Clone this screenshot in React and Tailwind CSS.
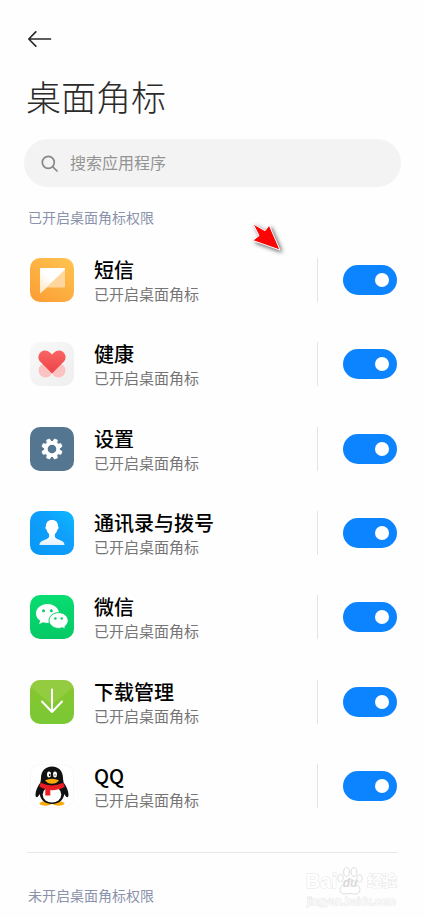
import { useId, useState } from 'react';

function MessageIcon() {
  return (
    <svg viewBox="0 0 44 44" className="size-11 shrink-0" aria-hidden="true">
      <defs>
        <linearGradient id="msgBg" x1="0.9" y1="0" x2="0.2" y2="1">
          <stop offset="0" stopColor="#ffc350" />
          <stop offset="1" stopColor="#fb9f35" />
        </linearGradient>
        <linearGradient id="msgFold" x1="0.1" y1="0.9" x2="0.9" y2="0.1">
          <stop offset="0" stopColor="#ffe9cb" />
          <stop offset="0.5" stopColor="#fff" />
        </linearGradient>
      </defs>
      <rect width="44" height="44" rx="10" fill="url(#msgBg)" />
      <path d="M11 10h23a1 1 0 0 1 1 1v17.500a1 1 0 0 1-1 1H17.500L10 35.500V11a1 1 0 0 1 1-1z" fill="#ffe6c4" opacity="0.700" />
      <path d="M11 10h23a1 1 0 0 1 1 1v.500L10 35.500V11a1 1 0 0 1 1-1z" fill="url(#msgFold)" />
    </svg>
  );
}

function HealthIcon() {
  return (
    <svg viewBox="0 0 44 44" className="size-11 shrink-0" aria-hidden="true">
      <defs>
        <linearGradient id="healthBg" x1="0" y1="0" x2="1" y2="1">
          <stop offset="0" stopColor="#f8f8f8" />
          <stop offset="1" stopColor="#efefef" />
        </linearGradient>
        <linearGradient id="heart" x1="0.5" y1="0" x2="0.5" y2="1">
          <stop offset="0" stopColor="#f96663" />
          <stop offset="1" stopColor="#ed4248" />
        </linearGradient>
      </defs>
      <rect width="44" height="44" rx="10" fill="url(#healthBg)" />
      <circle cx="15.500" cy="28.500" r="7" fill="#fac3c2" />
      <circle cx="28.500" cy="28.500" r="7" fill="#fac3c2" />
      <path d="M22 31.500 10.300 19.700C7.700 17 7.900 12.900 10.400 10.400c2.800-2.800 7-2.500 9.500 0L22 12.500l2.100-2.100c2.500-2.500 6.700-2.800 9.500 0 2.500 2.500 2.700 6.600.1 9.300z" fill="url(#heart)" />
    </svg>
  );
}

const TEETH = [0, 45, 90, 135, 180, 225, 270, 315];

function SettingsIcon() {
  return (
    <svg viewBox="0 0 44 44" className="size-11 shrink-0" aria-hidden="true">
      <rect width="44" height="44" rx="10" fill="#547690" />
      <g fill="#fff">
        <circle cx="22" cy="22" r="8" />
        {TEETH.map((angle) => (
          <path key={angle} d="M19.800 15 20.500 11.800h3l.7 3.200z" stroke="#fff" strokeWidth="0.800" strokeLinejoin="round" transform={`rotate(${angle + 22.5} 22 22)`} />
        ))}
      </g>
      <circle cx="22" cy="22" r="4.300" fill="#547690" />
    </svg>
  );
}

function ContactsIcon() {
  return (
    <svg viewBox="0 0 44 44" className="size-11 shrink-0" aria-hidden="true">
      <defs>
        <linearGradient id="contactBg" x1="0" y1="1" x2="1" y2="0">
          <stop offset="0" stopColor="#0797f5" />
          <stop offset="0.600" stopColor="#109ffb" />
          <stop offset="1" stopColor="#0bb9ff" />
        </linearGradient>
        <linearGradient id="person" x1="0" y1="0" x2="0" y2="1">
          <stop offset="0.500" stopColor="#fff" />
          <stop offset="1" stopColor="#e3f1fb" />
        </linearGradient>
      </defs>
      <rect width="44" height="44" rx="10" fill="url(#contactBg)" />
      <path d="M22 9c4 0 6.200 2.700 6.100 6.600.9.300.5 2.600-.7 3.200-.5 2-1.500 3.500-2.500 4.300v2.500c0 1.200 1 1.900 3.500 2.800 3.500 1.200 6.100 2.200 6.100 5.600H9.500c0-3.400 2.600-4.400 6.100-5.600 2.500-.9 3.500-1.600 3.500-2.800v-2.500c-1-.8-2-2.300-2.500-4.300-1.200-.6-1.600-2.900-.7-3.200C15.800 11.700 18 9 22 9z" fill="url(#person)" />
    </svg>
  );
}

function WechatIcon() {
  return (
    <svg viewBox="0 0 44 44" className="size-11 shrink-0" aria-hidden="true">
      <defs>
        <linearGradient id="wechatBg" x1="0" y1="0" x2="0" y2="1">
          <stop offset="0" stopColor="#08dd70" />
          <stop offset="1" stopColor="#05c965" />
        </linearGradient>
      </defs>
      <rect width="44" height="44" rx="10" fill="url(#wechatBg)" />
      <path d="M17.500 9C10.900 9 6 13.300 6 18.500c0 3 1.600 5.600 4.200 7.300L9 29.200l4-2c1.400.5 2.900.8 4.500.8C24 28 29 23.700 29 18.500S24 9 17.500 9z" fill="#fff" />
      <path d="M28.500 17.600c5.300 0 9.700 3.600 9.700 8 0 2.500-1.300 4.600-3.400 6l.8 2.700-3.200-1.600c-1.200.5-2.500.7-3.900.7-5.300 0-9.500-3.500-9.500-7.800s4.200-8 9.500-8z" fill="#fff" stroke="#06d06a" strokeWidth="1" />
      <g fill="#07cd69">
        <circle cx="13.500" cy="15.800" r="1.500" />
        <circle cx="21.300" cy="15.800" r="1.500" />
        <circle cx="25.400" cy="23.500" r="1.200" />
        <circle cx="31.700" cy="23.500" r="1.200" />
      </g>
    </svg>
  );
}

function DownloadIcon() {
  return (
    <svg viewBox="0 0 44 44" className="size-11 shrink-0" aria-hidden="true">
      <defs>
        <linearGradient id="dlBg" x1="0" y1="0" x2="0" y2="1">
          <stop offset="0" stopColor="#8bc52e" />
          <stop offset="1" stopColor="#79c935" />
        </linearGradient>
      </defs>
      <rect width="44" height="44" rx="10" fill="url(#dlBg)" />
      <path d="M1 7Q3 0 10 0h24q7 0 9 7L22 25z" fill="#9fd152" opacity="0.500" />
      <path d="M22 9.500v22M12 21.500l10 10.500 10-10.500" fill="none" stroke="#fff" strokeWidth="2" strokeLinecap="round" strokeLinejoin="round" />
    </svg>
  );
}

function QQIcon() {
  return (
    <svg viewBox="0 0 44 44" className="size-11 shrink-0" aria-hidden="true">
      <rect x="0.500" y="0.500" width="43" height="43" rx="10" fill="#fff" stroke="#f8f8f8" />
      <ellipse cx="15.500" cy="39.500" rx="6" ry="2.200" fill="#faab07" />
      <ellipse cx="28.500" cy="39.500" rx="6" ry="2.200" fill="#faab07" />
      <path d="M22 2.500c-7 0-11 5-11 11.500 0 1.500-.4 3-.6 4.500C7.500 22.500 5.500 27 5.500 30.500c0 1.800.5 2.700 1 2.700 1.200 0 2.300-1.700 3.200-3.200C10.600 36.500 15.500 40 22 40s11.400-3.500 12.300-10c.9 1.500 2 3.200 3.200 3.200.5 0 1-.9 1-2.700 0-3.500-2-8-4.900-12-.2-1.500-.6-3-.6-4.500 0-6.500-4-11.500-11-11.500z" fill="#111" />
      <ellipse cx="22" cy="30.500" rx="9.300" ry="8" fill="#fff" />
      <path d="M10.700 18.800Q22 24 33.300 18.800l1.500 4.200Q28 27 20.300 26v5.500h-5V25q-3-.8-6-2.400z" fill="#ea1c24" />
      <ellipse cx="19" cy="10.500" rx="2" ry="3" fill="#fff" />
      <ellipse cx="25" cy="10.500" rx="2" ry="3" fill="#fff" />
      <ellipse cx="19.700" cy="11" rx="0.800" ry="1.300" fill="#111" />
      <path d="M24.100 11.500q.8-1.800 1.700 0" fill="none" stroke="#111" strokeWidth="0.800" />
      <path d="M15 16.300q7-3.300 14 0-2.500 3.500-7 3.500t-7-3.500z" fill="#faab07" />
    </svg>
  );
}

const APPS = [
  { name: '短信', Icon: MessageIcon },
  { name: '健康', Icon: HealthIcon },
  { name: '设置', Icon: SettingsIcon },
  { name: '通讯录与拨号', Icon: ContactsIcon },
  { name: '微信', Icon: WechatIcon },
  { name: '下载管理', Icon: DownloadIcon },
  { name: 'QQ', Icon: QQIcon },
];

function AppRow({ name, Icon }) {
  const id = useId();
  const [on, setOn] = useState(true);
  return (
    <li className="flex items-center">
      <Icon />
      <label htmlFor={id} className="ml-5 flex min-w-0 flex-1 flex-col pt-1">
        <span className="text-xl leading-6 font-medium text-black">{name}</span>
        <span className="text-[15px] leading-6 text-[#757575]">
          {on ? '已开启桌面角标' : '未开启桌面角标'}
        </span>
      </label>
      <span className="h-11 w-px bg-[#e4e4e4]" />
      <input
        id={id}
        type="checkbox"
        checked={on}
        onChange={(e) => setOn(e.target.checked)}
        className="ml-[25px] flex h-[30px] w-[54px] shrink-0 appearance-none items-center rounded-full bg-gray-300 px-2 before:size-[14px] before:rounded-full before:bg-white checked:justify-end checked:bg-[#0d84ff]"
      />
    </li>
  );
}

function Pointer() {
  return (
    <svg viewBox="0 0 36 34" className="absolute top-[220px] left-[249px] h-[34px] w-9 drop-shadow-[2px_2px_2px_rgba(0,0,0,0.600)]" aria-hidden="true">
      <path d="M4 3.800 16 10.700 20.200 5.200 31 30 3.800 20.500 10 15.700z" fill="#fb0505" stroke="#fff" strokeWidth="1" strokeLinejoin="round" />
    </svg>
  );
}

function Watermark() {
  return (
    <div className="absolute right-7 bottom-2 flex flex-col items-center font-['Liberation_Sans','Noto_Sans_CJK_SC',sans-serif] text-white [-webkit-text-stroke:1px_#e6e6e6] [paint-order:stroke]">
      <div className="flex items-center text-xl leading-6 font-bold">
        <span>Bai</span>
        <span className="relative flex w-[26px] justify-center pt-1 text-xs">
          <svg viewBox="0 0 26 28" className="absolute -top-1 left-0 h-7 w-[26px] [paint-order:normal]" fill="#fff" stroke="#dedede" strokeWidth="1" aria-hidden="true">
            <ellipse cx="3.500" cy="11" rx="2.800" ry="3.700" />
            <ellipse cx="9.500" cy="5" rx="2.900" ry="4.300" />
            <ellipse cx="17" cy="5" rx="2.900" ry="4.300" />
            <ellipse cx="22.500" cy="11.500" rx="2.800" ry="3.700" />
            <path d="M13 12c-3.500 0-4.500 3.500-7.500 6-4 3.500-3 9 2 9 2.500 0 3.500-.5 5.500-.5s3 .5 5.500.5c5 0 6-5.500 2-9-3-2.500-4-6-7.500-6z" />
          </svg>
          <span className="relative text-[#d9d9d9] italic [-webkit-text-stroke:0px]">du</span>
        </span>
        <span className="ml-1 text-[15px]">经验</span>
      </div>
      <span className="text-[11px] leading-4">jingyan.baidu.com</span>
    </div>
  );
}

export default function App() {
  return (
    <main className="relative min-h-[917px] w-full bg-[#fefefe] px-6 pt-[27px] font-['Noto_Sans_CJK_SC',sans-serif]">
      <button type="button" aria-label="返回" className="ml-1 block size-6">
        <svg viewBox="0 0 24 24" className="size-6" fill="none" stroke="#2b2b2b" strokeWidth="1.700" strokeLinecap="round" strokeLinejoin="round">
          <path d="M22.500 12H.800M7.800 4.800.800 12l7 7.200" />
        </svg>
      </button>
      <h1 className="mt-[21px] ml-[2px] text-[35px] leading-12 font-light text-[#2b2b2b]">桌面角标</h1>
      <label className="mt-[19px] flex h-12 items-center rounded-full bg-[#f3f3f3] pl-[17px]">
        <svg viewBox="0 0 17 17" className="size-[17px] shrink-0" fill="none" stroke="#888" strokeWidth="1.700" strokeLinecap="round" aria-hidden="true">
          <circle cx="7.300" cy="7.300" r="6" />
          <path d="m11.800 11.800 4.200 4.200" />
        </svg>
        <input
          type="search"
          aria-label="搜索应用程序"
          placeholder="搜索应用程序"
          className="ml-3 min-w-0 flex-1 bg-transparent pb-[2px] text-base text-[#333] outline-none placeholder:text-[#949494]"
        />
      </label>
      <h2 className="mt-5 ml-1 text-sm leading-5 text-[#8b92ab]">已开启桌面角标权限</h2>
      <ul className="mt-[11px] mr-1 ml-[6px] grid min-h-[590px] auto-rows-fr">
        {APPS.map((app) => (
          <AppRow key={app.name} {...app} />
        ))}
      </ul>
      <hr className="mx-[3px] mt-6 border-[#e8e8e8]" />
      <h2 className="mt-8 ml-1 text-sm leading-5 text-[#8b92ab]">未开启桌面角标权限</h2>
      <Pointer />
      <Watermark />
    </main>
  );
}
